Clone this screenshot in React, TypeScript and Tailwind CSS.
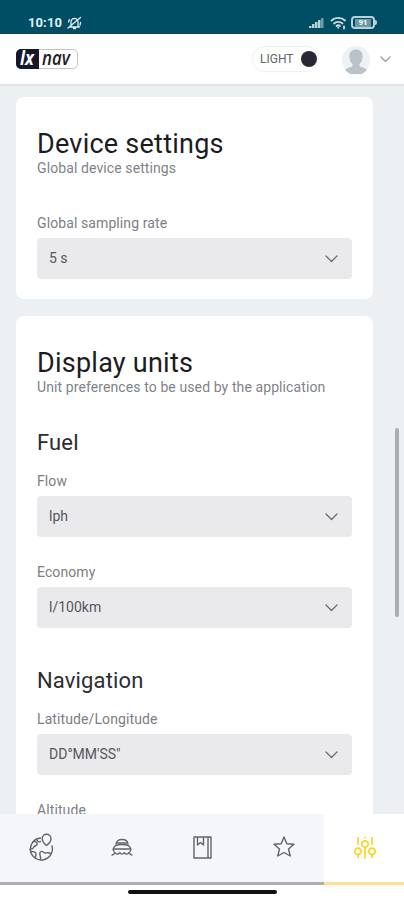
import type { ReactNode } from 'react'

const STROKE = {
  fill: 'none',
  stroke: 'currentColor',
  strokeLinecap: 'round',
  strokeLinejoin: 'round',
} as const

function StatusBar() {
  return (
    <div className="flex h-[34px] shrink-0 items-start border-b border-[#174058] bg-[#004e63] pl-7 pr-[27px] pt-[14px] text-[#e2eef1]">
      <span className="w-[35px] text-[13px] font-bold leading-[18px] tracking-[0.1px]">10:10</span>
      <svg className="ml-[4px] mt-[2px]" width="15" height="14" viewBox="0 0 15 14" {...STROKE} strokeWidth="1.3">
        <path d="M4 10V6.500a3.500 3.500 0 0 1 7-1V10l1.500 1H3zM6.500 12.500h2M1 12 13.500 1.500M1.500 6l1-2.500M13.500 6.500 13 9" />
      </svg>
      <div className="flex-1" />
      <svg className="mt-[3px]" width="15" height="12" viewBox="0 0 15 12" fill="#b9d1d8">
        <path d="M0 11h2.500V9H0zM3 11h2.500V7H3zM6 11h2.500V5H6zM9 11h2.500V3H9z" />
        <path d="M12 11h2.500V1H12z" opacity=".6" />
      </svg>
      <svg className="ml-[6px] mt-[2px]" width="17" height="14" viewBox="0 0 17 14" {...STROKE} strokeWidth="1.8" color="#cfe0e5">
        <path d="M1.500 4.500a10 10 0 0 1 13.500 0M4 7.500a6.300 6.300 0 0 1 8.500 0M6.500 10a2.700 2.700 0 0 1 3.500 0M8.200 11.700v.1M14 10.500v2" />
      </svg>
      <div className="ml-[4px] mt-[2px] flex h-[13px] w-[24px] items-center justify-center rounded-[4px] border-2 border-[#b9d1d8]">
        <span className="bg-[#6d98a5] px-[3px] text-[8px] font-bold leading-[8px] text-white">91</span>
      </div>
      <div className="mt-[6px] h-[5px] w-[2px] rounded-r bg-[#b9d1d8]" />
    </div>
  )
}

function Logo() {
  return (
    <div className="flex h-[20px] w-[62px] items-center rounded-[5px] border border-[#c3c4ca] font-['Open_Sans',sans-serif] italic">
      <div className="-ml-px flex h-[20px] w-[23px] shrink-0 items-center rounded-l-[5px] bg-[#17172c] pl-[4px]">
        <span className="relative -top-px origin-left scale-x-[0.88] text-[19px] font-bold leading-[20px] text-white">lx</span>
      </div>
      <span className="relative -top-px ml-[3px] origin-left scale-x-[0.84] text-[20px] font-semibold leading-[20px] text-[#1d1d25]">nav</span>
    </div>
  )
}

function Header() {
  return (
    <header className="flex h-[52px] shrink-0 items-center border-b-2 border-[#dfe3e7] bg-white pl-4 pr-[13px]">
      <Logo />
      <div className="flex-1" />
      <button className="flex h-[26px] w-[67px] items-center justify-between rounded-full border border-[#f1f1f3] pl-[7px] pr-px shadow-[0_0_2px_#f3f3f5]">
        <span className="text-[12px] text-[#62646a]">LIGHT</span>
        <span className="size-4 rounded-full bg-[#282733]" />
      </button>
      <svg className="relative top-px ml-[23px]" width="28" height="28" viewBox="0 0 28 28">
        <circle cx="14" cy="14" r="14" fill="#edf2f5" />
        <path d="M14 3.500c-4.500 0-7 3-6.500 7.500.1 3.300 1.500 5.500 3 7v2c-1.500 1.500-5 1.500-7.500 3.700a14 14 0 0 0 22 0c-2.500-2.200-6-2.200-7.500-3.700v-2c1.500-1.500 2.900-3.700 3-7 .5-4.500-2-7.500-6.500-7.500z" fill="#b9c3c9" />
      </svg>
      <svg className="ml-[10px]" width="11" height="7" viewBox="0 0 11 7" {...STROKE} strokeWidth="1.7" color="#a7abb0">
        <path d="m1 1 4.500 4.500L10 1" />
      </svg>
    </header>
  )
}

function Card({ title, subtitle, children }: { title: string; subtitle: string; children: ReactNode }) {
  return (
    <section className="rounded-lg bg-white px-[21px] pb-5 pt-[31px]">
      <h2 className="h-[32px] text-[27px] leading-[32px] tracking-[0.24px] text-[#1c1c1f]">{title}</h2>
      <p className="h-[17px] whitespace-nowrap text-[14px] leading-[17px] tracking-[0.1px] text-[#808389]">{subtitle}</p>
      {children}
    </section>
  )
}

function SelectField({ label, value }: { label: string; value?: string }) {
  return (
    <div>
      <div className="h-[24px] text-[14px] leading-[18px] tracking-[0.1px] text-[#7c7e84]">{label}</div>
      <button className="flex h-[41px] w-full items-center justify-between rounded-[4px] bg-[#eaeaec] pl-3 pr-[14px] text-[14px] text-[#54565d]">
        <span>{value}</span>
        <svg width="13" height="8" viewBox="0 0 13 8" {...STROKE} strokeWidth="1.3" color="#686b71">
          <path d="m1 1 5.500 5.500L12 1" />
        </svg>
      </button>
    </div>
  )
}

function SectionTitle({ children }: { children: ReactNode }) {
  return <h3 className="h-[42px] text-[22px] leading-[26px] tracking-[0.15px] text-[#2c2c31]">{children}</h3>
}

function GlobeIcon() {
  return (
    <svg width="26" height="28" viewBox="0 0 26 28" {...STROKE} strokeWidth="1.4">
      <path d="M12.500 5A11 11 0 1 0 24 13" />
      <path d="M18.500 12.500c-3-2.500-4.300-4.500-4.300-6.800a4.400 4.400 0 0 1 8.800 0c0 2.300-1.300 4.300-4.500 6.800z" />
      <path d="M5 9c1.500-1 3.500-.5 4 1s-.5 2.500-2 3-1 2-2.500 2.500-2 .5-2.500 1M2.500 19c2.500-1 5.500 0 5.500 2s-1 2-.5 4.500M12.500 26c.8-2-1.500-4-.5-6.500.8-1.800 3-1.200 4 0 1.200 1 2.500.2 4 .3s2 .5 2.500 1M9 7c.5 1.500 2 2.500 3.500 1.500" />
    </svg>
  )
}

function ShipIcon() {
  return (
    <svg width="22" height="19" viewBox="0 0 22 19" {...STROKE} strokeWidth="1.3">
      <path d="M5 6.500C5 3 7.500 1.500 11 1.500S17 3 17 6.500M6.500 5h9" />
      <path d="M3 13.500 2 11.500C2.500 8 5 6.500 11 6.500s8.500 1.500 9 5l-1 2M3 11h16" />
      <path d="M1 17c1.500 0 2.300-1 2.800-2.500 1.500 2 3.300 2 5 .2 1.500 1.800 3 1.800 4.500 0 1.600 1.800 3.400 1.800 4.900-.2.500 1.500 1.300 2.500 2.800 2.500" />
    </svg>
  )
}

function BookIcon() {
  return (
    <svg width="19" height="23" viewBox="0 0 19 23" {...STROKE} strokeWidth="1.4">
      <path d="M1 1h17v21H1zM15 1v21M4.500 1v8L7.500 6.500l3 2.500V1" />
    </svg>
  )
}

function StarIcon() {
  return (
    <svg width="22" height="22" viewBox="0 0 22 22" {...STROKE} strokeWidth="1.4">
      <path d="m11 1 2.800 6.700 7.200.6-5.500 4.700 1.800 7L11 16.500 4.700 20l1.800-7L1 8.300l7.200-.6z" />
    </svg>
  )
}

function SlidersIcon() {
  return (
    <svg width="22" height="23" viewBox="0 0 22 23" {...STROKE} strokeWidth="1.600">
      <path d="M4 1.500v7M4 19v2.500M11 1.500v.2M11 12v10M18 1.500v7M18 19v2.500" />
      <path d="M4 19 1.700 17.500a3.100 3.100 0 1 1 4.600 0zM11 11.700 8.700 10.200a3.100 3.100 0 1 1 4.600 0zM18 19l-2.300-1.500a3.100 3.100 0 1 1 4.600 0z" />
    </svg>
  )
}

const tabs = [
  { id: 'map', icon: <GlobeIcon /> },
  { id: 'craft', icon: <ShipIcon /> },
  { id: 'logbook', icon: <BookIcon /> },
  { id: 'favorites', icon: <StarIcon /> },
  { id: 'settings', icon: <SlidersIcon /> },
]

function BottomNav() {
  return (
    <nav className="flex h-[71px] shrink-0">
      {tabs.map((tab) => (
        <button
          key={tab.id}
          className={
            tab.id === 'settings'
              ? 'flex flex-1 items-center justify-center border-b-[3px] border-[#ffdf91] bg-white pb-[2px] pl-px text-[#f9d41c]'
              : 'flex w-[81px] items-center justify-center border-b-[3px] border-[#adaeb4] bg-[#f4f6f9] pb-[2px] text-[#62646d]'
          }
        >
          {tab.icon}
        </button>
      ))}
    </nav>
  )
}

export default function App() {
  return (
    <div className="flex h-[900px] w-[404px] flex-col overflow-hidden bg-white font-[Roboto,sans-serif]">
      <StatusBar />
      <Header />
      <main className="relative flex min-h-0 flex-1 flex-col gap-[17px] overflow-hidden bg-[#ecf0f3] pl-4 pr-[31px] pt-[11px]">
        <Card title="Device settings" subtitle="Global device settings">
          <div className="pt-[37px]">
            <SelectField label="Global sampling rate" value="5 s" />
          </div>
        </Card>
        <Card title="Display units" subtitle="Unit preferences to be used by the application">
          <div className="pt-[34px]">
            <SectionTitle>Fuel</SectionTitle>
            <div className="flex flex-col gap-[26px]">
              <SelectField label="Flow" value="lph" />
              <SelectField label="Economy" value="l/100km" />
            </div>
          </div>
          <div className="pt-[40px]">
            <SectionTitle>Navigation</SectionTitle>
            <div className="flex flex-col gap-[26px]">
              <SelectField label="Latitude/Longitude" value={'DD°MM\'SS"'} />
              <SelectField label="Altitude" />
            </div>
          </div>
        </Card>
        <div className="absolute right-[5px] top-[342px] h-[189px] w-[4px] rounded-full bg-[#a9aeb2]" />
      </main>
      <BottomNav />
      <div className="flex h-[15px] shrink-0 justify-center pt-[5px]">
        <div className="h-[4px] w-[149px] rounded-full bg-[#111]" />
      </div>
    </div>
  )
}
